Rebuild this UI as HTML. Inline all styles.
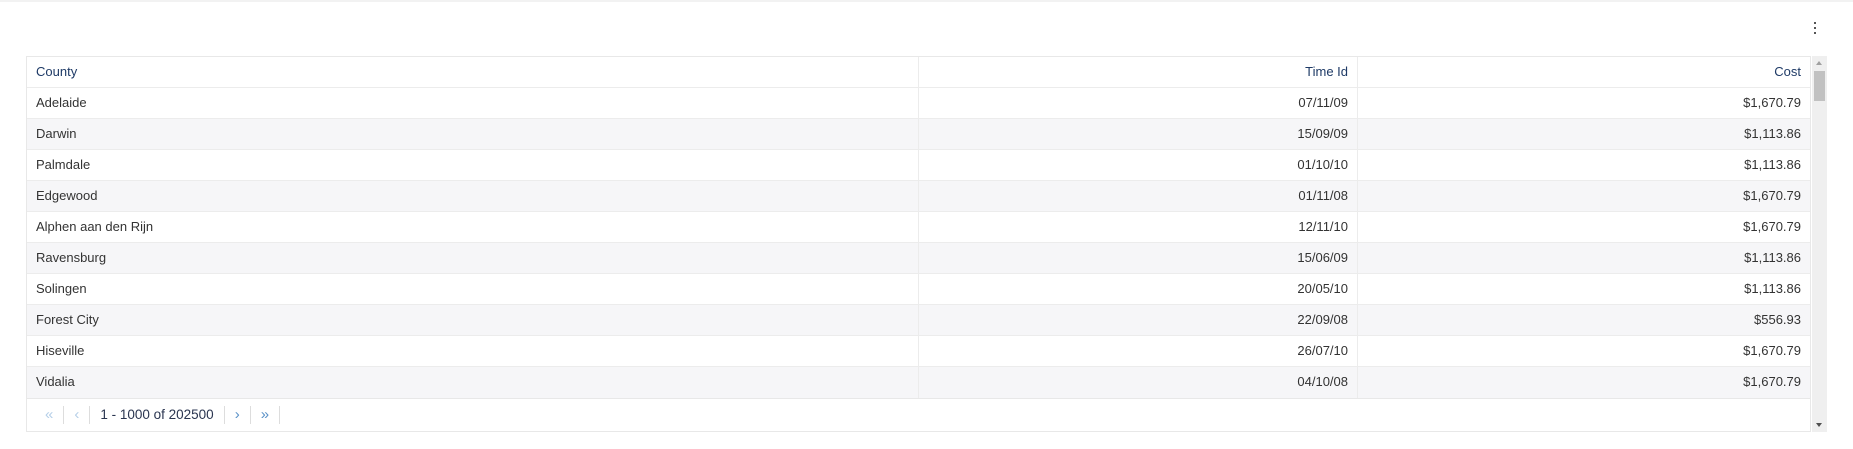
<!DOCTYPE html>
<html><head><style>
body{margin:0;width:1853px;height:449px;background:#fff;font-family:"Liberation Sans",sans-serif;font-size:13px;color:#333;position:relative;overflow:hidden}
.top{position:absolute;left:0;top:0;width:1853px;height:2px;background:#f2f2f2}
.dots{position:absolute;left:1814px;top:22px;width:3px}
.dots i{display:block;width:2px;height:2px;background:#555;margin-bottom:3px}
.tbl{position:absolute;left:26px;top:56px;width:1785px;border:1px solid #e8e8e8;box-sizing:border-box}
.row{height:31px;display:flex;border-bottom:1px solid #ececec;box-sizing:border-box}
.row.h{background:#fff;color:#1e3a66}
.row div{line-height:30px;box-sizing:border-box}
.c1{width:892px;padding-left:9px;border-right:1px solid #ececec}
.c2{width:439px;text-align:right;padding-right:9px;border-right:1px solid #ececec}
.c3{flex:1;text-align:right;padding-right:9px}
.pager{position:absolute;left:26px;top:398px;width:1785px;height:34px;border:1px solid #e8e8e8;box-sizing:border-box;display:flex;align-items:center;font-size:13.5px}
.pager span{display:inline-block;padding:0 10px;border-right:1px solid #ddd;line-height:18px;color:#5b92c8;font-size:15px}
.pager span.t{color:#2a3550;font-size:13.5px}
.sb{position:absolute;left:1812px;top:56px;width:15px;height:376px;background:#efefef}
.sb .th{position:absolute;left:2px;top:15px;width:11px;height:30px;background:#c1c1c1}
</style></head><body>
<div class="top"></div>
<div class="dots"><i></i><i></i><i></i></div>
<div class="tbl">
<div class="row h"><div class="c1">County</div><div class="c2">Time Id</div><div class="c3">Cost</div></div>
<div class="row" style="background:#fff"><div class="c1">Adelaide</div><div class="c2">07/11/09</div><div class="c3">$1,670.79</div></div>
<div class="row" style="background:#f6f6f8"><div class="c1">Darwin</div><div class="c2">15/09/09</div><div class="c3">$1,113.86</div></div>
<div class="row" style="background:#fff"><div class="c1">Palmdale</div><div class="c2">01/10/10</div><div class="c3">$1,113.86</div></div>
<div class="row" style="background:#f6f6f8"><div class="c1">Edgewood</div><div class="c2">01/11/08</div><div class="c3">$1,670.79</div></div>
<div class="row" style="background:#fff"><div class="c1">Alphen aan den Rijn</div><div class="c2">12/11/10</div><div class="c3">$1,670.79</div></div>
<div class="row" style="background:#f6f6f8"><div class="c1">Ravensburg</div><div class="c2">15/06/09</div><div class="c3">$1,113.86</div></div>
<div class="row" style="background:#fff"><div class="c1">Solingen</div><div class="c2">20/05/10</div><div class="c3">$1,113.86</div></div>
<div class="row" style="background:#f6f6f8"><div class="c1">Forest City</div><div class="c2">22/09/08</div><div class="c3">$556.93</div></div>
<div class="row" style="background:#fff"><div class="c1">Hiseville</div><div class="c2">26/07/10</div><div class="c3">$1,670.79</div></div>
<div class="row" style="background:#f6f6f8;border-bottom:none"><div class="c1">Vidalia</div><div class="c2">04/10/08</div><div class="c3">$1,670.79</div></div>
</div>
<div class="pager"><span style="margin-left:8px;color:#b5cfe8">«</span><span style="color:#b5cfe8">‹</span><span class="t">1 - 1000 of 202500</span><span>›</span><span>»</span></div>
<div class="sb"><div class="th"></div>
<div style="position:absolute;left:4px;top:5px;border:3.5px solid transparent;border-bottom:4px solid #a0a0a0;border-top:none"></div>
<div style="position:absolute;left:4px;top:367px;border:3.5px solid transparent;border-top:4px solid #505050;border-bottom:none"></div>
</div>
</body></html>
